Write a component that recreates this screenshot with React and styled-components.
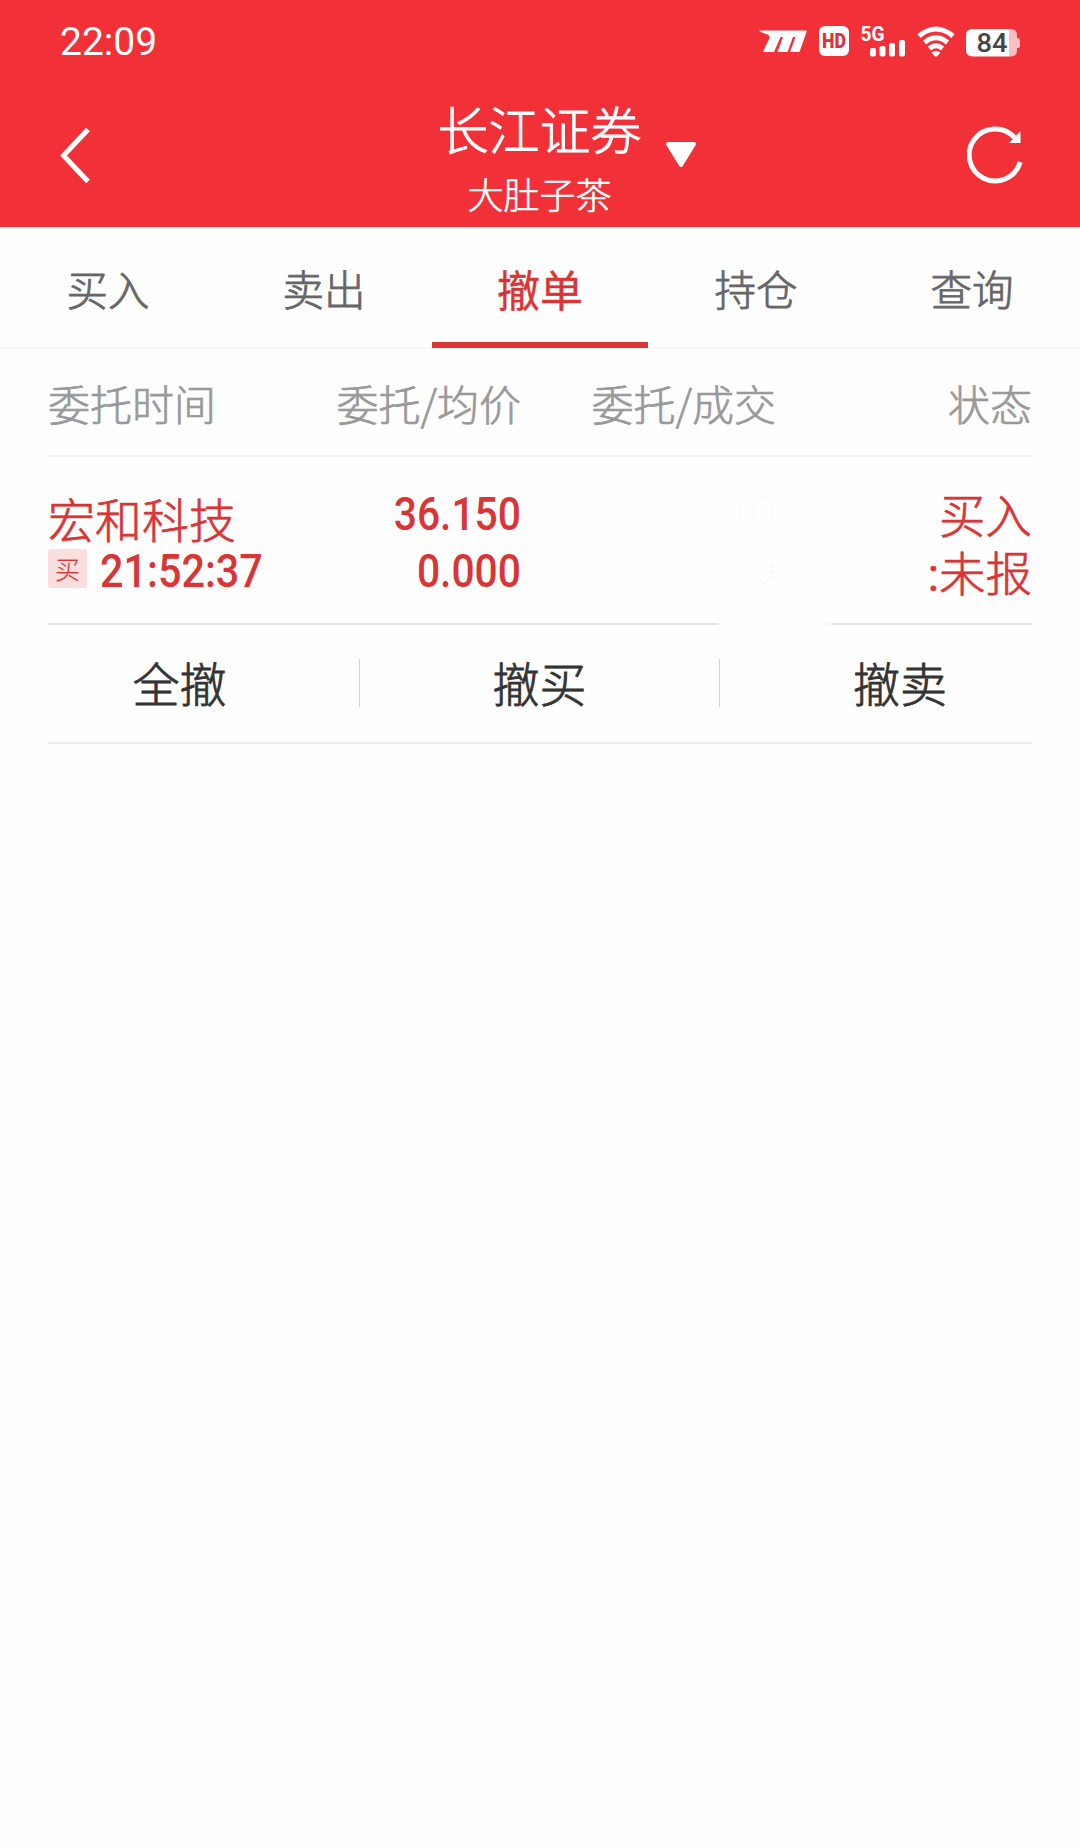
import styled, { createGlobalStyle } from "styled-components";

const RED = "#d83636";

const GlobalStyle = createGlobalStyle`
  * {
    box-sizing: border-box;
  }
  body {
    margin: 0;
    background: #fefefe;
    font-family: "Noto Sans CJK SC", sans-serif;
  }
`;

//--->Header<-----
const Page = styled.div`
  width: 1080px;
  min-height: 1848px;
  background: #fefefe;
`;

const Header = styled.header`
  height: 227px;
  background: #f23038;
  color: #fff;
`;

const StatusBar = styled.div`
  display: flex;
  align-items: center;
  justify-content: space-between;
  height: 82px;
  padding: 0 60px 0 60px;
`;

const Clock = styled.span`
  padding-top: 2px;
  font: 400 39px/82px Roboto, sans-serif;
`;

const StatusIcons = styled.svg`
  display: block;
  width: 264px;
  height: 82px;
`;

const NavBar = styled.div`
  display: grid;
  grid-template-columns: 160px 1fr 160px;
  height: 145px;
`;

const NavButton = styled.button`
  display: flex;
  border: 0;
  background: none;
  justify-content: ${({ $end }) => ($end ? "flex-end" : "flex-start")};
  padding: ${({ $end }) => ($end ? "43px 51px 0 0" : "44px 0 0 58px")};
`;

const Account = styled.div`
  display: flex;
  justify-content: center;
  padding-left: 54px;
`;

const AccountText = styled.div`
  display: flex;
  flex-direction: column;
  align-items: center;
  font-weight: 300;
  -webkit-text-stroke: 0.9px currentColor;
`;

const Broker = styled.div`
  font-size: 51px;
  line-height: 60px;
  height: 60px;
  margin-top: 16px;
`;

const Nickname = styled.div`
  font-size: 36px;
  line-height: 40px;
  margin-top: 15px;
  -webkit-text-stroke-width: 0.6px;
`;

const Caret = styled.svg`
  width: 32px;
  height: 28px;
  margin: 59px 0 0 23px;
`;

//--->Tabs<-----
const Tabs = styled.nav`
  display: grid;
  grid-template-columns: repeat(5, 1fr);
  height: 122px;
  border-bottom: 2px solid #f6f6f6;
`;

const Tab = styled.div`
  height: 121px;
  padding-top: 31px;
  text-align: center;
  line-height: 60px;
  color: ${({ $active }) => ($active ? RED : "#666")};
  font-size: ${({ $active }) => ($active ? 43 : 41.5)}px;
  font-weight: ${({ $active }) => ($active ? 400 : 300)};
  -webkit-text-stroke: ${({ $active }) => ($active ? 0.4 : 0.8)}px currentColor;
  border-bottom: ${({ $active }) => ($active ? `6px solid ${RED}` : "0")};
`;

//--->Order list<-----
const Orders = styled.section`
  padding: 0 48px;
`;

const Columns = styled.div`
  display: grid;
  grid-template-columns: 222px 251px 255px 256px;
  font-weight: 300;
  -webkit-text-stroke: 0.7px currentColor;
`;

const HeadRow = styled(Columns)`
  height: 108px;
  padding-top: 24px;
  border-bottom: 2px solid #f5f5f5;
  color: #999;
  font-size: 42px;
  line-height: 60px;
`;

const Cell = styled.div`
  text-align: ${({ $left }) => ($left ? "left" : "right")};
  white-space: nowrap;
`;

const OrderRow = styled(Columns)`
  height: 166px;
  color: ${RED};
`;

const StockName = styled.div`
  margin-top: 33px;
  font-size: 47px;
  line-height: 56px;
`;

const TimeLine = styled.div`
  display: flex;
  align-items: center;
  height: 50px;
  margin-top: -1px;
`;

const SideBadge = styled.span`
  flex: none;
  width: 39px;
  height: 39px;
  margin: -3px 13px 0 0;
  border-radius: 3px;
  background: #fbdfdf;
  font-size: 25px;
  line-height: 38px;
  text-align: center;
  -webkit-text-stroke: 0.2px currentColor;
`;

const Digits = styled.span`
  display: block;
  font: 500 47px/57px Roboto, sans-serif;
  transform: scaleX(${({ $left }) => ($left ? 0.88 : 0.868)});
  transform-origin: ${({ $left }) => ($left ? "left" : "right")} center;
  -webkit-text-stroke: 0;
`;

const Prices = styled(Cell)`
  padding-top: 28px;
`;

const Volume = styled.div`
  display: flex;
  justify-content: flex-end;
  padding-top: 35px;
`;

const Status = styled(Cell)`
  padding-top: 27px;
  font-size: 46.5px;
  line-height: 57.5px;
`;

const Colon = styled.span`
  font-family: Roboto, sans-serif;
  font-weight: 400;
`;

// the rule under the row is worn away between 670px and 783px
const Rule = styled.div`
  height: 2px;
  background: linear-gradient(
    90deg,
    #e5e5e5 670px,
    #fafafa 670px 783px,
    #e5e5e5 783px
  );
`;

//--->Cancel actions<-----
const Actions = styled.div`
  display: grid;
  grid-template-columns: repeat(3, 1fr);
  align-items: center;
  height: 117px;
  margin: 0 -48px;
  padding-bottom: 2px;
`;

const Action = styled.div`
  height: 48px;
  border-right: ${({ $last }) => ($last ? "0" : "1px solid #d4d4d4")};
  color: #333;
  font-size: 47px;
  font-weight: 300;
  line-height: 46px;
  text-align: center;
  -webkit-text-stroke: 0.8px currentColor;
`;

const BottomRule = styled.div`
  height: 2px;
  background: #ebebeb;
`;

const tabs = ["买入", "卖出", "撤单", "持仓", "查询"];
const actions = ["全撤", "撤买", "撤卖"];

const PhoneStatus = () => (
  <StatusIcons viewBox="756 0 264 82" fill="#fff">
    <path d="M759 30.500H807L799.500 52H790L795.500 37H793L787.500 52H777.500L783 37H780.500L774 52H763L769.500 38Q770 35 766 34Q762 33 759 30.500Z" />
    <rect x="819" y="26" width="30" height="30" rx="6" />
    <text
      x="834"
      y="48"
      fill="#d8363e"
      textAnchor="middle"
      fontFamily="Roboto"
      fontWeight="900"
      fontSize="19.500"
      textLength="24"
      lengthAdjust="spacingAndGlyphs"
    >
      HD
    </text>
    <text
      x="860.500"
      y="41"
      fontFamily="Roboto"
      fontWeight="700"
      fontSize="20.500"
      textLength="24"
      lengthAdjust="spacingAndGlyphs"
    >
      5G
    </text>
    <rect x="870" y="48" width="6" height="8.500" rx="2" />
    <rect x="879.500" y="46" width="6" height="10.500" rx="2" />
    <rect x="889" y="43" width="6" height="13.500" rx="2" />
    <rect x="899" y="40" width="6" height="16.500" rx="2" />
    <g fill="none" stroke="#fff" strokeWidth="5">
      <path d="M919 36Q936 22 953 36" />
      <path d="M924.500 42.500Q936 33 947.500 42.500" />
      <path d="M929.500 48.500Q936 43 942.500 48.500" />
    </g>
    <path d="M931.500 52.500Q936 49.500 940.500 52.500L937.500 56Q936 57 934.500 56Z" />
    <path
      d="M1009 29H1011Q1017 29 1017 35V38Q1020 38 1020 40V46Q1020 48 1017 48V50Q1017 56.500 1011 56.500H1009Z"
      fill="#fbbfc2"
    />
    <path d="M973 29H1009V56.500H973Q966 56.500 966 50V35Q966 29 973 29Z" />
    <text
      x="992"
      y="52"
      fill="#444"
      textAnchor="middle"
      fontFamily="Roboto"
      fontWeight="500"
      fontSize="25"
      textLength="31"
      lengthAdjust="spacingAndGlyphs"
    >
      84
    </text>
  </StatusIcons>
);

const BackIcon = () => (
  <svg width="34" height="60" fill="none" stroke="#fff" strokeWidth="5">
    <path d="M30 3.500L5.500 29.500L30 55.500" />
  </svg>
);

const RefreshIcon = () => (
  <svg width="62" height="62" fill="none">
    <path
      d="M53.200 37A26 26 0 1 1 47.500 12.500"
      stroke="#fff"
      strokeWidth="5"
    />
    <path d="M53.500 6V18H42L46 14L50 9.500Z" fill="#fff" />
  </svg>
);

const Residue = () => (
  <svg width="96" height="96" fill="none" stroke="#f9efef">
    <path d="M24 10Q31 2 38 12M52 8Q60 4 61 22L56 32" strokeDasharray="2 3" />
    <path
      d="M74 28V16Q75 3 87 5Q92 8 92 18V26"
      strokeWidth="2"
      strokeDasharray="1 3"
    />
    <path
      d="M91 74V82Q88 93 80 92"
      strokeWidth="2"
      strokeDasharray="2 3"
    />
  </svg>
);

const App = () => {
  return (
    <Page>
      <GlobalStyle />
      <Header>
        <StatusBar>
          <Clock>22:09</Clock>
          <PhoneStatus />
        </StatusBar>
        <NavBar>
          <NavButton aria-label="back">
            <BackIcon />
          </NavButton>
          <Account>
            <AccountText>
              <Broker>长江证券</Broker>
              <Nickname>大肚子茶</Nickname>
            </AccountText>
            <Caret viewBox="0 0 32 28">
              <path
                d="M3 3H29L16 24Z"
                fill="#fff"
                stroke="#fff"
                strokeWidth="4"
                strokeLinejoin="round"
              />
            </Caret>
          </Account>
          <NavButton $end aria-label="refresh">
            <RefreshIcon />
          </NavButton>
        </NavBar>
      </Header>

      <Tabs>
        {tabs.map((name) => (
          <Tab key={name} $active={name === "撤单"}>
            {name}
          </Tab>
        ))}
      </Tabs>

      <Orders>
        <HeadRow>
          <Cell $left>委托时间</Cell>
          <Cell>委托/均价</Cell>
          <Cell>委托/成交</Cell>
          <Cell>状态</Cell>
        </HeadRow>
        <OrderRow>
          <Cell $left>
            <StockName>宏和科技</StockName>
            <TimeLine>
              <SideBadge>买</SideBadge>
              <Digits $left>21:52:37</Digits>
            </TimeLine>
          </Cell>
          <Prices>
            <Digits>36.150</Digits>
            <Digits>0.000</Digits>
          </Prices>
          <Volume>
            <Residue />
          </Volume>
          <Status>
            <div>买入</div>
            <div>
              <Colon>:</Colon>未报
            </div>
          </Status>
        </OrderRow>
        <Rule />
        <Actions>
          {actions.map((name, indx) => (
            <Action key={name} $last={indx === actions.length - 1}>
              {name}
            </Action>
          ))}
        </Actions>
        <BottomRule />
      </Orders>
    </Page>
  );
};

export default App;
